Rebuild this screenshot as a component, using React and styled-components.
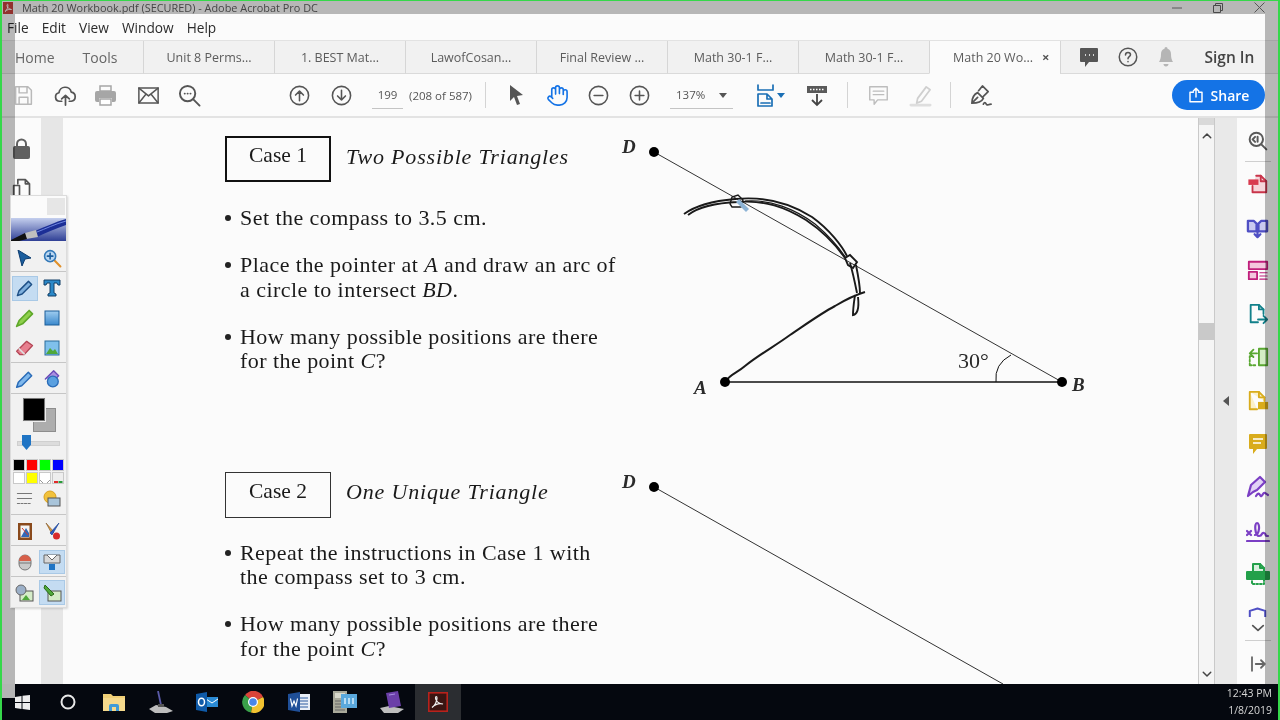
import React from 'react';
import styled, { createGlobalStyle } from 'styled-components';

const Global = createGlobalStyle`
  * { box-sizing: border-box; margin: 0; padding: 0; }
  html, body { width: 1280px; height: 720px; overflow: hidden; background: #fff; }
  body { font-family: "Open Sans", "Liberation Sans", sans-serif; }
`;

const Screen = styled.div`
  position: relative;
  width: 1280px;
  height: 720px;
  border: solid #35d84a;
  border-width: 1px 2px 0;
  display: flex;
  flex-direction: column;
  overflow: hidden;
  background: #fbfbfb;
  filter: blur(0.3px);
`;

const Shade = styled.div`
  position: absolute;
  background: rgba(0, 0, 0, 0.27);
  pointer-events: none;
  ${p => p.$side === 'top' && 'left: 13px; right: 13px; top: 0; height: 13px;'}
  ${p => p.$side === 'left' && 'left: 0; width: 13px; top: 0; height: 683px;'}
  ${p => p.$side === 'right' && 'right: 0; width: 13px; top: 0; height: 683px;'}
`;

const TitleBar = styled.div`
  height: 13px;
  flex: none;
  display: flex;
  align-items: center;
  padding-left: 1px;
  color: #5f5f5f;
  font-size: 10.9px;
  background: #fbfbfb;
`;

const TitleText = styled.span`
  margin-left: 9px;
  white-space: nowrap;
`;

const WinControls = styled.div`
  margin-left: auto;
  display: flex;
  align-items: center;
  gap: 31px;
  padding-right: 13px;
`;

const MenuBar = styled.div`
  height: 26px;
  flex: none;
  display: flex;
  align-items: center;
  padding-left: 5px;
  gap: 13px;
  font-size: 13.7px;
  color: #2b2b2b;
  background: #fbfbfb;
`;

const TabBar = styled.div`
  height: 34px;
  flex: none;
  display: flex;
  align-items: stretch;
  background: #f1f1f1;
  border-top: 1px solid #e2e2e2;
  color: #5c5c5c;
  font-size: 12.5px;
`;

const HomeTabs = styled.div`
  width: 141px;
  display: flex;
  align-items: center;
  padding-left: 13px;
  gap: 28px;
  font-size: 14px;
  color: #666;
  border-bottom: 1px solid #dadada;
`;

const Tab = styled.div`
  width: 131px;
  display: flex;
  align-items: center;
  justify-content: ${p => (p.$active ? 'flex-start' : 'center')};
  padding-left: ${p => (p.$active ? '23px' : '0')};
  border-left: 1px solid #d6d6d6;
  border-bottom: 1px solid ${p => (p.$active ? '#fbfbfb' : '#dadada')};
  background: ${p => (p.$active ? '#fbfbfb' : '#f1f1f1')};
  white-space: nowrap;
`;

const TabClose = styled.span`
  margin-left: 9px;
  font-size: 13px;
  font-weight: 700;
  color: #555;
`;

const TabTools = styled.div`
  flex: 1;
  display: flex;
  align-items: center;
  padding-left: 18px;
  gap: 18.5px;
  border-left: 1px solid #d6d6d6;
  border-bottom: 1px solid #dadada;
`;

const SignIn = styled.span`
  margin-left: 10px;
  font-size: 15.5px;
  font-weight: 600;
  color: #444;
`;

const ToolBar = styled.div`
  height: 44px;
  flex: none;
  display: flex;
  align-items: center;
  background: #fbfbfb;
  border-bottom: 2px solid #e3e3e3;
  color: #555;
  font-size: 11.5px;
`;

const Cell = styled.div`
  width: ${p => p.$w}px;
  margin-left: ${p => p.$ml || 0}px;
  flex: none;
  display: flex;
  align-items: center;
  justify-content: center;
`;

const Field = styled.div`
  width: ${p => p.$w}px;
  margin-left: ${p => p.$ml || 0}px;
  padding-left: ${p => p.$pl || 0}px;
  flex: none;
  height: 27px;
  display: flex;
  align-items: center;
  justify-content: ${p => (p.$pl ? 'flex-start' : 'center')};
  border-bottom: 1px solid #c4c4c4;
  white-space: nowrap;
`;

const PageCount = styled.span`
  margin-left: 6px;
  width: 54px;
  flex: none;
  white-space: nowrap;
`;

const Divider = styled.div`
  width: 1px;
  height: 26px;
  flex: none;
  margin-left: ${p => p.$ml}px;
  background: #d4d4d4;
`;

const ShareButton = styled.div`
  margin-left: auto;
  margin-right: 13px;
  width: 93px;
  height: 30px;
  border-radius: 15px;
  background: #1473e6;
  color: #fff;
  font-size: 14px;
  font-weight: 600;
  display: flex;
  align-items: center;
  justify-content: center;
  gap: 7px;
`;

const Main = styled.div`
  flex: 1;
  min-height: 0;
  display: flex;
`;

const LeftRail = styled.div`
  width: 39px;
  flex: none;
  display: flex;
  flex-direction: column;
  align-items: center;
  gap: 19px;
  padding-top: 20px;
  background: #fbfbfb;
`;

const LeftStrip = styled.div`
  width: 22px;
  flex: none;
  background: #e6e6e6;
`;

const Page = styled.div`
  flex: 1;
  min-width: 0;
  display: flex;
  overflow: hidden;
  background: #fbfbfb;
  color: #1a1a1a;
  font-family: "Liberation Serif", serif;
`;

const TextColumn = styled.div`
  width: 395px;
  margin-left: 162px;
  flex: none;
  padding-top: 18px;
`;

const CaseRow = styled.div`
  display: flex;
  align-items: center;
  margin-top: ${p => p.$mt || 0}px;
`;

const CaseBox = styled.div`
  width: 106px;
  height: 46px;
  flex: none;
  border: ${p => (p.$bold ? '2.5px solid #111' : '1px solid #333')};
  display: flex;
  justify-content: center;
  padding-top: ${p => (p.$bold ? 4 : 5)}px;
  font-size: 21.5px;
  line-height: 26px;
`;

const CaseTitle = styled.h2`
  margin-left: 15px;
  margin-bottom: 5px;
  font-size: 22px;
  font-weight: 400;
  font-style: italic;
  letter-spacing: 0.82px;
  white-space: nowrap;
`;

const Bullets = styled.ul`
  list-style: none;
  margin-top: ${p => p.$mt}px;
  margin-left: 15px;
  display: flex;
  flex-direction: column;
  gap: 22.5px;
`;

const Bullet = styled.li`
  position: relative;
  font-size: 22px;
  line-height: 24.5px;
  letter-spacing: 0.45px;
  white-space: nowrap;

  &::before {
    content: '';
    position: absolute;
    left: -15px;
    top: 9px;
    width: 6px;
    height: 6px;
    border-radius: 50%;
    background: #222;
  }
`;

const Diagram = styled.svg`
  flex: none;
  display: block;
`;

const Label = styled.text`
  font-family: "Liberation Serif", serif;
  font-size: ${p => p.$size || 19}px;
  font-style: ${p => (p.$plain ? 'normal' : 'italic')};
  font-weight: ${p => (p.$plain ? 400 : 700)};
  fill: #2a2a2a;
`;

const ScrollTrack = styled.div`
  width: 17px;
  flex: none;
  display: flex;
  flex-direction: column;
  align-items: center;
  background: #f5f5f5;
  border: solid #c9c9c9;
  border-width: 0 1px;
`;

const ScrollStub = styled.div`
  width: 100%;
  height: 7px;
  background: #d9d9d9;
`;

const ScrollThumb = styled.div`
  width: 100%;
  height: 17px;
  margin-top: 181px;
  background: #c9c9c9;
`;

const ScrollArrow = styled.div`
  margin-top: ${p => (p.$end ? 'auto' : '5px')};
  margin-bottom: ${p => (p.$end ? '4px' : '0')};
  height: 12px;
  display: flex;
  align-items: center;
`;

const CollapsePane = styled.div`
  width: 22px;
  flex: none;
  display: flex;
  align-items: center;
  justify-content: center;
  background: #e9e9e9;
`;

const CollapseArrow = styled.div`
  width: 0;
  height: 0;
  border: solid transparent;
  border-width: 5px 6px 5px 0;
  border-right-color: #555;
`;

const ToolRail = styled.div`
  width: 41px;
  flex: none;
  display: flex;
  flex-direction: column;
  align-items: center;
  padding-top: 12px;
  background: #fbfbfb;
`;

const RailSlot = styled.div`
  height: ${p => p.$h || 43.4}px;
  flex: none;
  display: flex;
  align-items: ${p => (p.$end ? 'flex-end' : 'center')};
  justify-content: center;
`;

const RailLine = styled.div`
  width: 26px;
  height: 1px;
  flex: none;
  background: #cfcfcf;
  margin-top: ${p => p.$mt || 0}px;
`;

const Palette = styled.div`
  position: absolute;
  left: 8px;
  top: 194px;
  width: 57px;
  height: 413px;
  display: flex;
  flex-direction: column;
  background: #f1f1f1;
  border: 1px solid #dcdcdc;
  box-shadow: 1px 1px 2px rgba(0, 0, 0, 0.15);
`;

const PaletteHead = styled.div`
  height: 22px;
  flex: none;
  display: flex;
  justify-content: flex-end;
  padding: 2px 1px 3px 0;
  background: #fbfbfb;
`;

const PaletteClose = styled.div`
  width: 18px;
  height: 17px;
  background: #e6e6e6;
`;

const PenStrip = styled.svg`
  flex: none;
  display: block;
`;

const PaletteSection = styled.div`
  flex: none;
  height: ${p => p.$h}px;
  display: grid;
  grid-template-columns: 1fr 1fr;
  grid-auto-rows: ${p => p.$row || 30}px;
  align-items: center;
  justify-items: center;
  padding: ${p => p.$pt || 1}px 0 0;
  border-bottom: ${p => (p.$last ? '0' : '1px solid #c6c6c6')};
`;

const PaletteCell = styled.div`
  width: 26px;
  height: ${p => p.$h || 25}px;
  display: flex;
  align-items: center;
  justify-content: center;
  background: ${p => (p.$on ? '#c4dcf2' : 'transparent')};
  border: 1px solid ${p => (p.$on ? '#a9c9e6' : 'transparent')};
`;

const ColorPanel = styled.div`
  flex: none;
  height: 121px;
  display: flex;
  flex-direction: column;
  border-bottom: 1px solid #c6c6c6;
`;

const SwatchStack = styled.div`
  position: relative;
  width: 33px;
  height: 34px;
  flex: none;
  margin: 4px 0 0 12px;
`;

const BackSwatch = styled.div`
  position: absolute;
  right: 0;
  bottom: 0;
  width: 23px;
  height: 24px;
  background: #adadad;
  border: 1px solid #8d8d8d;
`;

const FrontSwatch = styled.div`
  position: absolute;
  left: 0;
  top: 0;
  width: 22px;
  height: 23px;
  background: #000;
  border: 1px solid #777;
  outline: 1px solid #eee;
`;

const SliderRow = styled.div`
  position: relative;
  height: 26px;
  flex: none;
  margin: 0 6px;

  &::before {
    content: '';
    position: absolute;
    left: 0;
    right: 0;
    top: 9px;
    height: 3px;
    background: #dcdcdc;
    border: 1px solid #cfcfcf;
  }
`;

const SliderThumb = styled.div`
  position: absolute;
  left: 5px;
  top: 3px;
  width: 9px;
  height: 15px;
  background: #1f74c4;
  clip-path: polygon(0 0, 100% 0, 100% 65%, 50% 100%, 0 65%);
`;

const ColorGrid = styled.div`
  display: grid;
  grid-template-columns: repeat(4, 11.5px);
  grid-auto-rows: 11.5px;
  gap: 1.5px;
  margin: 1px 0 0 2px;
  flex: none;
`;

const Color = styled.div`
  background: ${p => p.$c};
  border: 1px solid #c9c9c9;
  overflow: hidden;
`;

const LineRow = styled.div`
  flex: 1;
  display: grid;
  grid-template-columns: 1fr 1fr;
  align-items: center;
  justify-items: center;
`;

const Taskbar = styled.div`
  position: relative;
  height: 36px;
  flex: none;
  display: flex;
  align-items: center;
  background: #05080f;
`;

const TaskNotch = styled.div`
  position: absolute;
  left: 0;
  top: 0;
  width: 13px;
  height: 14px;
  background: #b4b4b4;
`;

const TaskIcons = styled.div`
  display: flex;
  align-items: stretch;
  height: 100%;
  margin-left: -3px;
`;

const TaskCell = styled.div`
  width: 46.2px;
  flex: none;
  display: flex;
  align-items: center;
  justify-content: center;
  background: ${p => (p.$on ? '#2b2d31' : 'transparent')};
`;

const Clock = styled.div`
  margin-left: auto;
  padding-right: 6px;
  text-align: right;
  color: #d6d6d6;
  font-size: 10.5px;
  line-height: 17px;
`;

const Ico = ({ s = 24, h, vb = '0 0 24 24', c = '#555', w = 2, children }) => (
  <svg width={s} height={h || s} viewBox={vb} fill="none" stroke={c} strokeWidth={w} strokeLinejoin="round" strokeLinecap="round">
    {children}
  </svg>
);

const CircleArrow = ({ up }) => (
  <Ico s={21} w={1.8}>
    <circle cx="12" cy="12" r="10.4" />
    {up ? <path d="M12 18V7M7.5 11.5 12 7l4.5 4.5" /> : <path d="M12 6v11M7.5 12.5 12 17l4.5-4.5" />}
  </Ico>
);

const Caret = ({ c = '#555' }) => (
  <svg width="8" height="5" viewBox="0 0 8 5"><path d="M0 0h8L4 5z" fill={c} /></svg>
);

const railIcons = [
  <Ico s={22} c="#c9344a" w={2}>
    <path d="M10 3h5l6 6v12H6v-7" fill="#f6d5da" /><path d="M15 3v6h6" /><rect x="1.5" y="7" width="11" height="6" fill="#d83a4f" stroke="none" />
  </Ico>,
  <Ico s={23} c="#4f4fc4" w={2.4}>
    <path d="M2 5h6l3 3v8H2zM13 8l3-3h6v11h-9z" fill="#c9c9f0" /><path d="M12 16v6M9 19l3 3 3-3" />
  </Ico>,
  <Ico s={22} c="#c01f7c" w={2}>
    <rect x="2" y="3" width="20" height="8" fill="#f4c6de" /><rect x="2" y="14" width="9" height="8" fill="#f4c6de" /><path d="M14 15h8M14 18.5h8M14 22h8" strokeWidth="1.2" />
  </Ico>,
  <Ico s={22} c="#11808a" w={2}>
    <path d="M4 2h9l5 5v5M4 2v19h8" /><path d="M13 2v5h5" /><path d="M12 18h10M18 14l4 4-4 4" />
  </Ico>,
  <Ico s={22} c="#5aa832" w={2}>
    <rect x="13" y="3" width="9" height="18" fill="#d5eec4" /><path d="M3 21h7M3 11v10M3 11h3" strokeDasharray="2 2" /><path d="M11 8H4M7 4 3 8l4 4" />
  </Ico>,
  <Ico s={22} c="#d9ac1c" w={2}>
    <path d="M3 2h10l6 6v4M3 2v19h8" fill="#fbf0c8" /><path d="M13 2v6h6" /><rect x="12" y="13" width="11" height="8" fill="#d9ac1c" stroke="none" />
  </Ico>,
  <svg width="20" height="22" viewBox="0 0 20 22">
    <path d="M2 1h16a1 1 0 0 1 1 1v13a1 1 0 0 1-1 1H9l-4 5v-5H2a1 1 0 0 1-1-1V2a1 1 0 0 1 1-1z" fill="#d9ac1c" />
    <path d="M5 6h10M5 10h8" stroke="#fff" strokeWidth="1.6" />
  </svg>,
  <Ico s={24} c="#7b3fc4" w={2.2}>
    <path d="M2 21 5 10 14 2l5 5-8 8-4 2z" fill="#e2d2f6" /><path d="M10 21c2-3 3-3 4-1s2 1 3-1 2-1 5 1" />
  </Ico>,
  <Ico s={24} c="#7b3fc4" w={2.2}>
    <path d="M1 12l4 4M5 12l-4 4M9 16c5-1 5-12 2-12s-2 13 2 13 2-4 5-3 0 3 4 3" /><path d="M1 22h22" />
  </Ico>,
  <Ico s={24} c="#23a04a" w={2}>
    <path d="M7 10V2h7l4 4v4" fill="#d8f0de" /><path d="M14 2v4h4" /><rect x="1" y="10" width="22" height="7" fill="#23a04a" /><path d="M6 16v6h12v-6" strokeDasharray="1.5 2" />
  </Ico>,
];

const tabNames = ['Unit 8 Perms...', '1. BEST Mat...', 'LawofCosan...', 'Final Review ...', 'Math 30-1 F...', 'Math 30-1 F...'];
const colors = ['#000', '#f00', '#0f0', '#00f', '#fff', '#ff0'];

function Tabs() {
  return (
    <TabBar>
      <HomeTabs>
        <span>Home</span>
        <span>Tools</span>
      </HomeTabs>
      {tabNames.map((name, i) => <Tab key={i}>{name}</Tab>)}
      <Tab $active>Math 20 Wo...<TabClose>×</TabClose></Tab>
      <TabTools>
        <svg width="20" height="20" viewBox="0 0 20 20">
          <path d="M2 1h16a1 1 0 0 1 1 1v12a1 1 0 0 1-1 1h-8l-4 5v-5H2a1 1 0 0 1-1-1V2a1 1 0 0 1 1-1z" fill="#555" />
          <path d="M6 8h1M10 8h1M14 8h1" stroke="#fff" strokeWidth="1.6" />
        </svg>
        <Ico s={20} w={1.8}>
          <circle cx="12" cy="12" r="10.5" />
          <path d="M9 9.5C9 7.5 10.5 6.5 12 6.5s3 1 3 2.8c0 2.2-3 2.4-3 4.7M12 17.5v.2" />
        </Ico>
        <svg width="20" height="20" viewBox="0 0 20 20">
          <path d="M10 0c1 0 1.500.8 1.500 1.700C14 2.500 15 4.500 15 7c0 4 .8 6 2 8H3c1.200-2 2-4 2-8 0-2.500 1-4.500 3.500-5.300C8.500.8 9 0 10 0zM7.500 17h5c0 1.500-1 2.500-2.500 2.500S7.500 18.500 7.500 17z" fill="#b5b5b5" />
        </svg>
        <SignIn>Sign In</SignIn>
      </TabTools>
    </TabBar>
  );
}

function Tools() {
  return (
    <ToolBar>
      <Cell $w={42}>
        <Ico s={21} c="#b9b9b9" w={1.7}>
          <path d="M3 2h14l4 4v16H3zM7 2v7h9V2M7 22v-8h10v8" />
        </Ico>
      </Cell>
      <Cell $w={42}>
        <Ico s={23} w={1.8}>
          <path d="M8 18H6a4.500 4.500 0 0 1-.8-8.900A6.500 6.500 0 0 1 18 8.500a4.800 4.800 0 0 1 0 9.500h-2" />
          <path d="M12 22v-10M8 15.500 12 12l4 3.500" />
        </Ico>
      </Cell>
      <Cell $w={38}>
        <svg width="21" height="21" viewBox="0 0 21 21">
          <path d="M5 1h11v5H5z" fill="none" stroke="#a6a6a6" strokeWidth="1.5" />
          <path d="M2 6h17a2 2 0 0 1 2 2v7a2 2 0 0 1-2 2h-2v-4H4v4H2a2 2 0 0 1-2-2V8a2 2 0 0 1 2-2z" fill="#a6a6a6" />
          <path d="M5 14h11v6H5z" fill="#fff" stroke="#a6a6a6" strokeWidth="1.5" />
        </svg>
      </Cell>
      <Cell $w={48}>
        <Ico s={21} h={17} vb="0 0 24 19" w={1.7}>
          <rect x="1" y="1" width="22" height="17" />
          <path d="M1 1l11 9 11-9M1 18l8-10M23 18 15 8" />
        </Ico>
      </Cell>
      <Cell $w={34}>
        <Ico s={23} w={2}>
          <circle cx="10" cy="10" r="8" />
          <path d="M16 16l6.500 6.500M7 10h.1M10 10h.1M13 10h.1" />
        </Ico>
      </Cell>
      <Cell $w={42} $ml={72}><CircleArrow up /></Cell>
      <Cell $w={42}><CircleArrow /></Cell>
      <Field $w={31} $ml={10}>199</Field>
      <PageCount>(208 of 587)</PageCount>
      <Divider $ml={22} />
      <Cell $w={30} $ml={15}>
        <svg width="15" height="20" viewBox="0 0 15 20"><path d="M1 0l13 10-6 1 3 8-3 1-3-8-4 4z" fill="#555" /></svg>
      </Cell>
      <Cell $w={50} $ml={1}>
        <Ico s={23} c="#1473e6" w={1.7}>
          <path d="M18 11V6a2 2 0 0 0-4 0M14 10V4a2 2 0 0 0-4 0v2M10 10.500V6a2 2 0 0 0-4 0v8M18 8a2 2 0 1 1 4 0v6a8 8 0 0 1-8 8h-2c-2.800 0-4.500-.9-6-2.400L2.400 16a2 2 0 0 1 2.800-2.800L7 15" />
        </Ico>
      </Cell>
      <Cell $w={32}>
        <Ico s={21} w={1.8}><circle cx="12" cy="12" r="10.400" /><path d="M7 12h10" /></Ico>
      </Cell>
      <Cell $w={51}>
        <Ico s={21} w={1.8}><circle cx="12" cy="12" r="10.400" /><path d="M7 12h10M12 7v10" /></Ico>
      </Cell>
      <Field $w={63} $ml={5} $pl={6}>137%</Field>
      <Cell $w={16} $ml={-18}><Caret /></Cell>
      <Cell $w={34} $ml={18}>
        <Ico s={20} h={23} vb="0 0 20 23" c="#1a6fb5" w={1.7}>
          <path d="M2 1v5h15V1M2 22V10h9l5 5v7zM11 10v5h5M5 19h9" />
        </Ico>
      </Cell>
      <Cell $w={8} $ml={-6}><Caret c="#1a6fb5" /></Cell>
      <Cell $w={40} $ml={12}>
        <svg width="22" height="23" viewBox="0 0 22 23">
          <rect x="1" y="2" width="20" height="7" fill="#5a5a5a" />
          <path d="M4 5.500h14" stroke="#fff" strokeWidth="1.400" strokeDasharray="1.500 1.500" />
          <path d="M11 10v11M6 16l5 5 5-5" stroke="#444" strokeWidth="1.800" fill="none" />
        </svg>
      </Cell>
      <Divider $ml={10} />
      <Cell $w={30} $ml={15}>
        <Ico s={21} c="#bdbdbd" w={1.6}>
          <path d="M2 2h20v15H11l-4 5v-5H2zM6 7h12M6 11h12" />
        </Ico>
      </Cell>
      <Cell $w={26} $ml={14}>
        <Ico s={23} c="#cfcfcf" w={1.8}>
          <path d="M9 15 18 3l4 3-9 12-5 2z" /><path d="M2 22h20" strokeWidth="3" stroke="#dedede" />
        </Ico>
      </Cell>
      <Divider $ml={17} />
      <Cell $w={30} $ml={14}>
        <Ico s={23} c="#555" w={1.8}>
          <path d="M3 20c0-5 2-9 6-11l6 6c-2 4-6 5-12 5zM3 20l6-6M10 7l4-5 6 6-5 5M15 21c1-2 2-2 3 0s2 0 5 0" />
        </Ico>
      </Cell>
      <ShareButton>
        <Ico s={16} c="#fff" w={2.2}>
          <path d="M8 8H3v14h18V8h-5M12 15V2M8 6l4-4 4 4" />
        </Ico>
        Share
      </ShareButton>
    </ToolBar>
  );
}

function PageDiagram() {
  return (
    <Diagram width="480" height="566" viewBox="620 118 480 566">
      <g stroke="#111" fill="none">
        <path d="M654 152 1062 382" strokeWidth="1" stroke="#333" />
        <path d="M725 382H1062" strokeWidth="1.5" />
        <path d="M1011 355Q994 364 996 382" strokeWidth="1" />
        <path d="M654 487 1003 684" strokeWidth="1" stroke="#333" />
        <g strokeWidth="1.9" stroke="#1a1a1a">
          <path d="M684 214C695 206 712 201 735 199C765 196 790 203 812 217C830 230 842 246 847 256" />
          <path d="M688 215C697 208 714 203 738 202C765 200 785 207 806 220C824 232 838 248 845 258" />
          <path d="M745 201C770 199 795 209 815 224C828 235 838 246 846 258" strokeWidth="1.2" />
          <path d="M730 204 732 197 738 195 743 200 741 207 732 207Z" strokeWidth="1.4" />
          <path d="M845 258 850 255 857 262 853 268 848 265Z" />
          <path d="M850 263C853 273 855 283 857 293M856 265C858 275 860 285 860 293" />
          <path d="M855 295C854 302 853 308 853 315 858 314 859 306 858 297" />
          <path d="M725 382C730 374 737 373 745 366C760 354 775 346 790 335C805 325 820 314 835 306C845 300 855 295 865 292" strokeWidth="2" />
        </g>
      </g>
      <path d="M739 199 749 209 746 212 736 202Z" fill="#8db4d6" />
      <circle cx="654" cy="152" r="5" fill="#000" />
      <circle cx="725" cy="382" r="5" fill="#000" />
      <circle cx="1062" cy="382" r="5" fill="#000" />
      <circle cx="654" cy="487" r="5" fill="#000" />
      <Label x="622" y="153">D</Label>
      <Label x="694" y="394">A</Label>
      <Label x="1072" y="391">B</Label>
      <Label $plain $size={22} x="958" y="368">30°</Label>
      <Label x="622" y="488">D</Label>
    </Diagram>
  );
}

function FloatingPalette() {
  return (
    <Palette>
      <PaletteHead><PaletteClose /></PaletteHead>
      <PenStrip width="55" height="23" viewBox="0 0 55 23">
        <defs>
          <linearGradient id="pen-bg" x1="0" y1="0" x2="0" y2="1">
            <stop offset="0" stopColor="#c4cfee" />
            <stop offset="1" stopColor="#2f3f95" />
          </linearGradient>
        </defs>
        <rect width="55" height="23" fill="url(#pen-bg)" />
        <path d="M24 13C34 9 44 4 55 1V7C44 11 34 15 26 19z" fill="#1c2f96" />
        <path d="M26 14C34 11 44 6 55 3" stroke="#6f86e0" fill="none" />
        <path d="M14 15 25 12 27 19 15 21z" fill="#bfbfbf" />
        <path d="M0 22 14 15 16 21 8 23H0z" fill="#111" />
      </PenStrip>
      <PaletteSection $h={31} $pt={2}>
        <PaletteCell>
          <svg width="15" height="16" viewBox="0 0 15 16"><path d="M1 0l13 8-6 1-3 7z" fill="#1b5e9e" stroke="#0c3c70" /></svg>
        </PaletteCell>
        <PaletteCell>
          <Ico s={19} c="#e0902a" w={2.6}>
            <path d="M14 14l8 8" /><circle cx="9" cy="9" r="7" fill="#bcd8f2" stroke="#3379b8" strokeWidth="2" /><path d="M5.500 9h7M9 5.500v7" stroke="#1b5e9e" strokeWidth="2" />
          </Ico>
        </PaletteCell>
      </PaletteSection>
      <PaletteSection $h={91}>
        <PaletteCell $on>
          <Ico s={19} c="#1d4f86" w={1.8}>
            <path d="M3 21l2-6L17 3l4 4L9 19z" fill="#7fb0dd" />
          </Ico>
        </PaletteCell>
        <PaletteCell>
          <svg width="18" height="18" viewBox="0 0 18 18">
            <path d="M1 1h16v5h-2l-1-2h-3v10l2 1v2H5v-2l2-1V4H4L3 6H1z" fill="#2a88c8" stroke="#123f66" />
          </svg>
        </PaletteCell>
        <PaletteCell>
          <Ico s={20} c="#5fa82a" w={2}>
            <path d="M2 22l3-7L17 3l4 4L9 19z" fill="#8fd04c" />
          </Ico>
        </PaletteCell>
        <PaletteCell>
          <svg width="16" height="16" viewBox="0 0 16 16">
            <defs>
              <linearGradient id="rect-bg" x1="0" y1="0" x2="0" y2="1">
                <stop offset="0" stopColor="#9fcdf0" />
                <stop offset="1" stopColor="#3a88cc" />
              </linearGradient>
            </defs>
            <rect x="1" y="1" width="14" height="14" fill="url(#rect-bg)" stroke="#1d5f99" />
          </svg>
        </PaletteCell>
        <PaletteCell>
          <Ico s={20} c="#b44555" w={1.6}>
            <path d="M2 16 14 4l7 5-10 11H6z" fill="#e77f8e" /><path d="M5 13l6 6" stroke="#ddd" strokeWidth="2" />
          </Ico>
        </PaletteCell>
        <PaletteCell>
          <svg width="16" height="16" viewBox="0 0 16 16">
            <rect x="1" y="1" width="14" height="14" fill="#7fc0ec" stroke="#2a6c9c" />
            <path d="M2 14 6 8l3 3 2-2 3 5z" fill="#4fa83a" />
          </svg>
        </PaletteCell>
      </PaletteSection>
      <PaletteSection $h={31}>
        <PaletteCell>
          <Ico s={20} c="#2a6cb8" w={1.8}>
            <path d="M2 22l2-6L16 4l4 4L8 20z" fill="#7fb8ec" />
          </Ico>
        </PaletteCell>
        <PaletteCell>
          <Ico s={20} c="#6a4ab8" w={1.6}>
            <path d="M4 12 14 2l6 6-3 3" fill="#a98fe0" /><circle cx="13" cy="15" r="6.500" fill="#5aa0e0" stroke="#2a6cb8" />
          </Ico>
        </PaletteCell>
      </PaletteSection>
      <ColorPanel>
        <SwatchStack>
          <BackSwatch />
          <FrontSwatch />
        </SwatchStack>
        <SliderRow><SliderThumb /></SliderRow>
        <ColorGrid>
          {colors.map(c => <Color key={c} $c={c} />)}
          <Color $c="#fff">
            <svg width="10" height="10" viewBox="0 0 10 10"><path d="M0 0l10 10M10 0 0 10" stroke="#999" /></svg>
          </Color>
          <Color $c="#eee">
            <svg width="10" height="10" viewBox="0 0 10 10">
              <rect x="1" y="1" width="4" height="4" fill="#e02a2a" /><rect x="5.500" y="1" width="4" height="4" fill="#2a9a3a" />
              <rect x="1" y="5.500" width="4" height="4" fill="#2a4ae0" /><rect x="5.500" y="5.500" width="4" height="4" fill="#e0a02a" />
            </svg>
          </Color>
        </ColorGrid>
        <LineRow>
          <Ico s={17} c="#777" w={1.6}><path d="M2 5h20M2 12h20" /><path d="M2 19h20" strokeDasharray="3 2" /></Ico>
          <svg width="18" height="17" viewBox="0 0 18 17">
            <circle cx="7" cy="7" r="6" fill="#f2c23c" stroke="#d9a020" />
            <rect x="5" y="8" width="12" height="8" fill="#a8c4da" stroke="#555" />
          </svg>
        </LineRow>
      </ColorPanel>
      <PaletteSection $h={31}>
        <PaletteCell>
          <svg width="14" height="17" viewBox="0 0 14 17">
            <rect width="14" height="17" fill="#8a4a1c" />
            <rect x="2.500" y="2.500" width="9" height="12" fill="#f4f4f4" />
            <path d="M3 14 8 5l3 5v4z" fill="#3268b8" /><path d="M4 5l6 7" stroke="#d83a2a" />
          </svg>
        </PaletteCell>
        <PaletteCell>
          <svg width="17" height="18" viewBox="0 0 17 18">
            <path d="M2 1l8 9-2 2z" fill="#e09a3a" stroke="#7a5020" strokeWidth=".6" />
            <path d="M15 1 6 11l2 2z" fill="#2a5ac8" stroke="#123a88" strokeWidth=".6" />
            <circle cx="12.500" cy="14" r="3.500" fill="#d82a2a" />
          </svg>
        </PaletteCell>
      </PaletteSection>
      <PaletteSection $h={31}>
        <PaletteCell $h={24}>
          <svg width="14" height="17" viewBox="0 0 14 17">
            <rect x="1" y="1" width="12" height="15" rx="6" fill="#c9c9c9" stroke="#777" />
            <path d="M1 7a6 6 0 0 1 12 0z" fill="#d8604a" />
            <path d="M1 9h12" stroke="#777" />
          </svg>
        </PaletteCell>
        <PaletteCell $on $h={24}>
          <svg width="18" height="18" viewBox="0 0 18 18">
            <path d="M1 2h16v8H1z" fill="#d8d8d8" stroke="#666" />
            <path d="M4 2l5 5 5-5" fill="#fff" stroke="#666" />
            <rect x="6" y="11" width="6" height="6" fill="#1f74c4" />
          </svg>
        </PaletteCell>
      </PaletteSection>
      <PaletteSection $h={30} $row={29} $last>
        <PaletteCell>
          <svg width="19" height="18" viewBox="0 0 19 18">
            <rect x="5" y="7" width="13" height="10" fill="#d5ecc8" stroke="#555" />
            <circle cx="6" cy="6" r="5" fill="#9cb0c8" stroke="#666" />
            <path d="M7 16l4-5 4 5z" fill="#4fa83a" />
          </svg>
        </PaletteCell>
        <PaletteCell $on>
          <svg width="19" height="18" viewBox="0 0 19 18">
            <rect x="5" y="7" width="13" height="10" fill="#d5ecc8" stroke="#555" />
            <path d="M2 1l9 9-3 2-7-8z" fill="#4fa83a" stroke="#2a6a1a" />
          </svg>
        </PaletteCell>
      </PaletteSection>
    </Palette>
  );
}

export default function App() {
  return (
    <>
      <Global />
      <Screen>
        <TitleBar>
          <svg width="10" height="12" viewBox="0 0 10 12">
            <rect width="10" height="12" fill="#c9453f" />
            <path d="M2 9.500C4 8.500 5 5 5 3c0-1-1-1-1 .5 0 2 2.500 4 4.500 4-2-.5-4.500 0-6.500 2z" stroke="#fff" strokeWidth=".9" fill="none" />
          </svg>
          <TitleText>Math 20 Workbook.pdf (SECURED) - Adobe Acrobat Pro DC</TitleText>
          <WinControls>
            <svg width="10" height="2" viewBox="0 0 10 2"><path d="M0 1h10" stroke="#7a7a7a" /></svg>
            <svg width="10" height="10" viewBox="0 0 10 10" fill="none" stroke="#666"><path d="M.5 2.500h7v7h-7zM2.500 2.500v-2h7v7h-2" /></svg>
            <svg width="11" height="11" viewBox="0 0 11 11"><path d="M.5.5l10 10M10.500.5l-10 10" stroke="#777" /></svg>
          </WinControls>
        </TitleBar>
        <MenuBar>
          <span>File</span>
          <span>Edit</span>
          <span>View</span>
          <span>Window</span>
          <span>Help</span>
        </MenuBar>
        <Tabs />
        <Tools />
        <Main>
          <LeftRail>
            <svg width="17" height="21" viewBox="0 0 17 21">
              <path d="M4 9V6a4.500 4.500 0 0 1 9 0v3" fill="none" stroke="#606060" strokeWidth="2" />
              <rect y="8" width="17" height="13" rx="2" fill="#606060" />
            </svg>
            <Ico s={20} c="#555" w={2}><path d="M7 7V2h9l5 5v15H7M16 2v5h5M2 9h7v13H2z" /></Ico>
          </LeftRail>
          <LeftStrip />
          <Page>
            <TextColumn>
              <CaseRow>
                <CaseBox $bold>Case 1</CaseBox>
                <CaseTitle>Two Possible Triangles</CaseTitle>
              </CaseRow>
              <Bullets $mt={24}>
                <Bullet>Set the compass to 3.5 cm.</Bullet>
                <Bullet>Place the pointer at <i>A</i> and draw an arc of<br />a circle to intersect <i>BD</i>.</Bullet>
                <Bullet>How many possible positions are there<br />for the point <i>C</i>?</Bullet>
              </Bullets>
              <CaseRow $mt={98}>
                <CaseBox>Case 2</CaseBox>
                <CaseTitle>One Unique Triangle</CaseTitle>
              </CaseRow>
              <Bullets $mt={23}>
                <Bullet>Repeat the instructions in Case 1 with<br />the compass set to 3 cm.</Bullet>
                <Bullet>How many possible positions are there<br />for the point <i>C</i>?</Bullet>
              </Bullets>
            </TextColumn>
            <PageDiagram />
          </Page>
          <ScrollTrack>
            <ScrollStub />
            <ScrollArrow>
              <Ico s={10} c="#444" w={3.5}><path d="M3 16 12 7l9 9" /></Ico>
            </ScrollArrow>
            <ScrollThumb />
            <ScrollArrow $end>
              <Ico s={10} c="#444" w={3.5}><path d="M3 8l9 9 9-9" /></Ico>
            </ScrollArrow>
          </ScrollTrack>
          <CollapsePane><CollapseArrow /></CollapsePane>
          <ToolRail>
            <RailSlot $h={22}>
              <Ico s={20} c="#5a5a5a" w={2.4}>
                <circle cx="10" cy="10" r="8" /><path d="M16 16l6 6M8.500 7 5.500 10l3 3M11.500 7v6" />
              </Ico>
            </RailSlot>
            <RailLine $mt={9} />
            {railIcons.map((icon, i) => <RailSlot key={i}>{icon}</RailSlot>)}
            <RailSlot $h={21} $end>
              <Ico s={19} h={10} vb="0 0 24 13" c="#4f4fc4" w={2.6}><path d="M2 13V5l10-3 10 3v8" /></Ico>
            </RailSlot>
            <RailSlot $h={23}>
              <Ico s={14} c="#555" w={3}><path d="M3 8l9 8 9-8" /></Ico>
            </RailSlot>
            <RailLine />
            <RailSlot $h={46}>
              <Ico s={18} c="#666" w={2.4}><path d="M4 3v18M9 12h12M16 7l5 5-5 5" /></Ico>
            </RailSlot>
          </ToolRail>
        </Main>
        <Taskbar>
          <TaskIcons>
            <TaskCell>
              <svg width="15" height="15" viewBox="0 0 15 15"><path d="M0 2l6.500-1v6H0zM7.500.8 15 0v7H7.500zM0 8h6.500v6L0 13zM7.500 8H15v7l-7.500-1z" fill="#eee" /></svg>
            </TaskCell>
            <TaskCell>
              <svg width="16" height="16" viewBox="0 0 16 16"><circle cx="8" cy="8" r="6.500" fill="none" stroke="#e8e8e8" strokeWidth="2" /></svg>
            </TaskCell>
            <TaskCell>
              <svg width="22" height="18" viewBox="0 0 22 18">
                <path d="M0 1h8l2 2h12v15H0z" fill="#f0cf76" />
                <rect y="5" width="22" height="13" fill="#f5d98c" />
                <path d="M6 18v-5a2 2 0 0 1 2-2h6a2 2 0 0 1 2 2v5h-3v-4H9v4z" fill="#3f9bd8" />
              </svg>
            </TaskCell>
            <TaskCell>
              <svg width="24" height="22" viewBox="0 0 24 22">
                <path d="M0 18 7 14l10 2 7 4-6 2H6z" fill="#bdbdbd" />
                <path d="M9 0l3 14" stroke="#5a5aa8" strokeWidth="1.800" />
                <path d="M9 13h6v3H9z" fill="#555" />
              </svg>
            </TaskCell>
            <TaskCell>
              <svg width="22" height="20" viewBox="0 0 22 20">
                <rect x="9" y="5" width="13" height="10" fill="#2a8ad4" />
                <path d="M10 7l6 4 6-4" stroke="#fff" fill="none" />
                <path d="M0 2 11 0v20L0 18z" fill="#0f5aa8" />
                <ellipse cx="5.500" cy="10" rx="3" ry="3.800" fill="none" stroke="#fff" strokeWidth="1.500" />
              </svg>
            </TaskCell>
            <TaskCell>
              <svg width="22" height="22" viewBox="0 0 22 22">
                <path d="M11 11 3 4A10.500 10.500 0 0 1 21 6z" fill="#d9443a" />
                <path d="M11 11 3 4A10.500 10.500 0 0 0 9 21.500z" fill="#3aa04a" />
                <path d="M11 11 21 6A10.500 10.500 0 0 1 9 21.500z" fill="#f2c230" />
                <circle cx="11" cy="11" r="5" fill="#fff" />
                <circle cx="11" cy="11" r="3.800" fill="#4a86e8" />
              </svg>
            </TaskCell>
            <TaskCell>
              <svg width="22" height="20" viewBox="0 0 22 20">
                <rect x="9" y="2" width="13" height="16" fill="#e8eef6" />
                <path d="M12 6h8M12 9h8M12 12h8M12 15h8" stroke="#2b5aa0" />
                <path d="M0 2 12 0v20L0 18z" fill="#1f4f98" />
                <path d="M2.500 6.500 4 14l2-5 2 5 1.500-7.500" fill="none" stroke="#fff" strokeWidth="1.200" />
              </svg>
            </TaskCell>
            <TaskCell>
              <svg width="24" height="22" viewBox="0 0 24 22">
                <rect y="0" width="14" height="22" fill="#a9a99a" />
                <rect x="2" y="2" width="10" height="5" fill="#d9d9cc" />
                <path d="M2 10h10M2 13h10M2 16h10M2 19h10" stroke="#666" />
                <rect x="8" y="3" width="16" height="14" fill="#5aa8dc" />
                <path d="M12 7v6M16 7v6M20 7v6" stroke="#d6ecfa" strokeWidth="1.500" />
              </svg>
            </TaskCell>
            <TaskCell>
              <svg width="24" height="22" viewBox="0 0 24 22">
                <path d="M0 17l9-2 15 3-6 4H4z" fill="#bdbdbd" />
                <path d="M6 2l12-2 3 15-12 2z" fill="#6b3fa8" />
                <path d="M9 4l6-1" stroke="#a98fe0" />
              </svg>
            </TaskCell>
            <TaskCell $on>
              <svg width="20" height="20" viewBox="0 0 20 20">
                <rect x=".8" y=".8" width="18.400" height="18.400" fill="#3a1512" stroke="#b8221c" strokeWidth="1.600" />
                <path d="M4 15.500C7 14 9 9 9 6c0-2-1.500-2-1.500 0 0 3 3.500 6 7.500 6-3-.7-7.500 0-11 3.500z" fill="none" stroke="#eee" strokeWidth="1.200" />
              </svg>
            </TaskCell>
          </TaskIcons>
          <TaskNotch />
          <Clock>12:43 PM<br />1/8/2019</Clock>
        </Taskbar>
        <Shade $side="top" />
        <Shade $side="left" />
        <Shade $side="right" />
        <FloatingPalette />
      </Screen>
    </>
  );
}
